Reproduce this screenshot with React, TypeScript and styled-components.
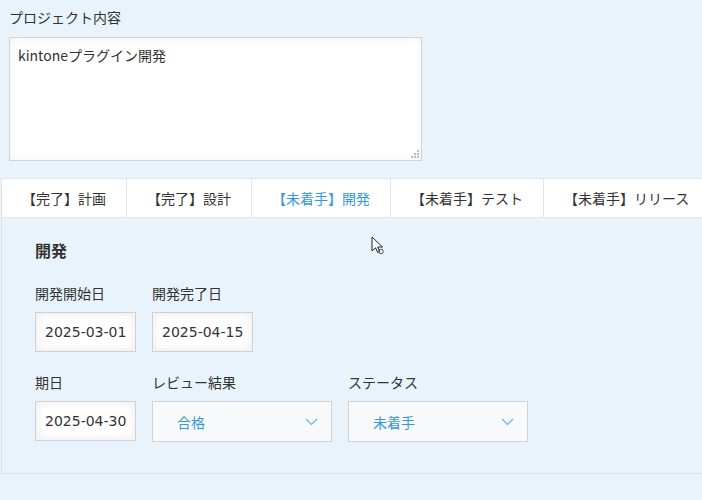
import React from 'react';
import styled, { createGlobalStyle } from 'styled-components';

// ─── Global ───────────────────────────────────────────────────────────────────
const GlobalStyle = createGlobalStyle`
  html, body {
    margin: 0;
    padding: 0;
    background: #e9f3fc;
  }
  body {
    font-family: "Noto Sans CJK JP", "Noto Sans", sans-serif;
    font-size: 14px;
    color: #333;
    overflow: hidden;
  }
  * { box-sizing: border-box; }
`;

// ─── Layout ───────────────────────────────────────────────────────────────────
const Page = styled.div`
  position: relative;
  width: 702px;
  height: 500px;
  padding-top: 7px;
  overflow: hidden;
`;

const FieldBlock = styled.div`
  padding: 0 8px 0 9px;
`;

const FieldLabel = styled.div`
  line-height: 20px;
  margin-bottom: 10px;
  color: #333;
`;

const TextAreaWrap = styled.div`
  position: relative;
  width: 413px;
  height: 124px;
`;

const TextArea = styled.textarea`
  display: block;
  width: 100%;
  height: 100%;
  margin: 0;
  padding: 7px 8px;
  border: 1px solid #cfd3d6;
  background: #fff;
  box-shadow: 1px 1px 10px #f2f2f2 inset;
  font: inherit;
  line-height: 20px;
  color: #333;
  resize: none;
  outline: none;
`;

const Grip = styled.svg`
  position: absolute;
  right: 2px;
  bottom: 2px;
`;

// ─── Tabs ─────────────────────────────────────────────────────────────────────
const TabBar = styled.div`
  display: flex;
  margin: 17px 0 0 1px;
  border-top: 1px solid #e1e5ea;
  overflow: hidden;
`;

const Tab = styled.div<{ $active?: boolean }>`
  flex-shrink: 0;
  height: 38px;
  line-height: 38px;
  padding: 0 20px;
  background: #fff;
  border-left: 1px solid #e1e5ea;
  white-space: nowrap;
  color: ${(p) => (p.$active ? '#3498db' : '#333')};
`;

const Panel = styled.div`
  margin-left: 1px;
  height: 257px;
  padding: 20px 34px 0 33px;
  border: 1px solid #d9e2ea;
  border-top-color: #dfe6ee;
  border-right: none;
`;

const PanelTitle = styled.h3`
  margin: 0 0 21px;
  font-size: 16px;
  font-weight: 700;
  line-height: 24px;
  color: #333;
`;

const Form = styled.div`
  display: flex;
  flex-direction: column;
  gap: 20px;
`;

const Row = styled.div`
  display: flex;
  gap: 16px;
`;

const Field = styled.div`
  display: flex;
  flex-direction: column;
  gap: 9px;
`;

const Label = styled.div`
  line-height: 20px;
  color: #333;
`;

const DateInput = styled.div`
  width: 101px;
  height: 40px;
  line-height: 38px;
  padding: 0 9px;
  background: #fff;
  border: 1px solid #cfd1d3;
  box-shadow: 1px 1px 10px #f0f0f0 inset, -1px -1px 10px #f0f0f0 inset;
  font-family: "DejaVu Sans", "Noto Sans CJK JP", sans-serif;
  font-size: 14px;
  color: #333;
  white-space: nowrap;
  overflow: hidden;
`;

const Select = styled.div`
  display: flex;
  align-items: center;
  justify-content: space-between;
  width: 180px;
  height: 41px;
  padding: 0 13px 0 24px;
  background: #f7f9fa;
  border: 1px solid #cfd1d3;
  color: #3498db;
`;

const Cursor = styled.svg`
  position: absolute;
  left: 371px;
  top: 236px;
`;

// ─── Data ─────────────────────────────────────────────────────────────────────
const tabs = [
  '【完了】計画',
  '【完了】設計',
  '【未着手】開発',
  '【未着手】テスト',
  '【未着手】リリース',
];

const Chevron = () => (
  <svg width="13" height="8" viewBox="0 0 13 8" fill="none">
    <path d="M1 1l5.5 5.5L12 1" stroke="#6aaee3" strokeWidth="1.1" />
  </svg>
);

// ─── Component ────────────────────────────────────────────────────────────────
export default function App() {
  return (
    <Page>
      <GlobalStyle />
      <FieldBlock>
        <FieldLabel>プロジェクト内容</FieldLabel>
        <TextAreaWrap>
          <TextArea defaultValue="kintoneプラグイン開発" />
          <Grip width="10" height="10" viewBox="0 0 10 10">
            {[
              [7, 1], [4, 4], [7, 4], [1, 7], [4, 7], [7, 7],
            ].map(([x, y], i) => (
              <rect key={i} x={x} y={y} width="2" height="2" fill="#bbb" />
            ))}
          </Grip>
        </TextAreaWrap>
      </FieldBlock>

      <TabBar>
        {tabs.map((t, i) => (
          <Tab key={t} $active={i === 2}>{t}</Tab>
        ))}
      </TabBar>

      <Panel>
        <PanelTitle>開発</PanelTitle>
        <Form>
          <Row>
            <Field>
              <Label>開発開始日</Label>
              <DateInput>2025-03-01</DateInput>
            </Field>
            <Field>
              <Label>開発完了日</Label>
              <DateInput>2025-04-15</DateInput>
            </Field>
          </Row>
          <Row>
            <Field>
              <Label>期日</Label>
              <DateInput>2025-04-30</DateInput>
            </Field>
            <Field>
              <Label>レビュー結果</Label>
              <Select>
                <span>合格</span>
                <Chevron />
              </Select>
            </Field>
            <Field>
              <Label>ステータス</Label>
              <Select>
                <span>未着手</span>
                <Chevron />
              </Select>
            </Field>
          </Row>
        </Form>
      </Panel>

      <Cursor width="14" height="20" viewBox="0 0 14 20">
        <path d="M1 1v14l3.5-3.2 2.2 4.6 2-0.9-2.1-4.5h4.9z" fill="#fff" stroke="#222" strokeWidth="1" strokeLinejoin="round" />
        <circle cx="10" cy="15.5" r="2.3" fill="none" stroke="#555" strokeWidth="1" />
      </Cursor>
    </Page>
  );
}
